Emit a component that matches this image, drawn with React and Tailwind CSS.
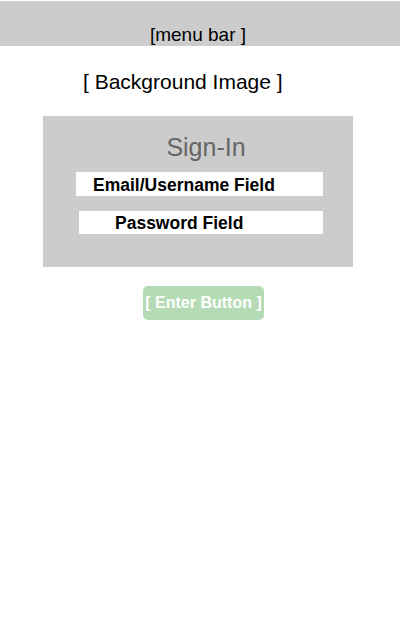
import React from "react";

function App() {
    return (
        <div className="w-[400px] h-[640px] bg-white font-['Liberation_Sans',sans-serif] text-black">
            {/* Menu bar */}
            <div className="mt-[1px] h-[45px] bg-[#cccccc] flex items-end justify-center">
                <span className="text-[19px] leading-[22px] ml-[-4px]">[menu bar ]</span>
            </div>

            {/* Background image placeholder */}
            <div className="pl-[83px] mt-[24px] text-[21px] leading-[24px]">[ Background Image ]</div>

            {/* Sign-in panel */}
            <div className="ml-[43px] mt-[22px] w-[310px] h-[151px] bg-[#cccccc] pt-[17px]">
                <h1 className="text-center pl-[16px] text-[25px] leading-[28px] text-[#666666]">Sign-In</h1>
                <div className="ml-[33px] mt-[11px] w-[247px] h-[24px] bg-white pl-[17px] text-[17.5px] leading-[27px] font-bold">
                    Email/Username Field
                </div>
                <div className="ml-[36px] mt-[15px] w-[244px] h-[23px] bg-white pl-[36px] text-[17.5px] leading-[25px] font-bold">
                    Password Field
                </div>
            </div>

            {/* Enter button */}
            <div className="mt-[19px] ml-[143px]">
                <button className="w-[121px] h-[34px] rounded-[5px] bg-[#b5dbb5] text-white text-[16px] font-bold">
                    [ Enter Button ]
                </button>
            </div>
        </div>
    );
}

export default App;
